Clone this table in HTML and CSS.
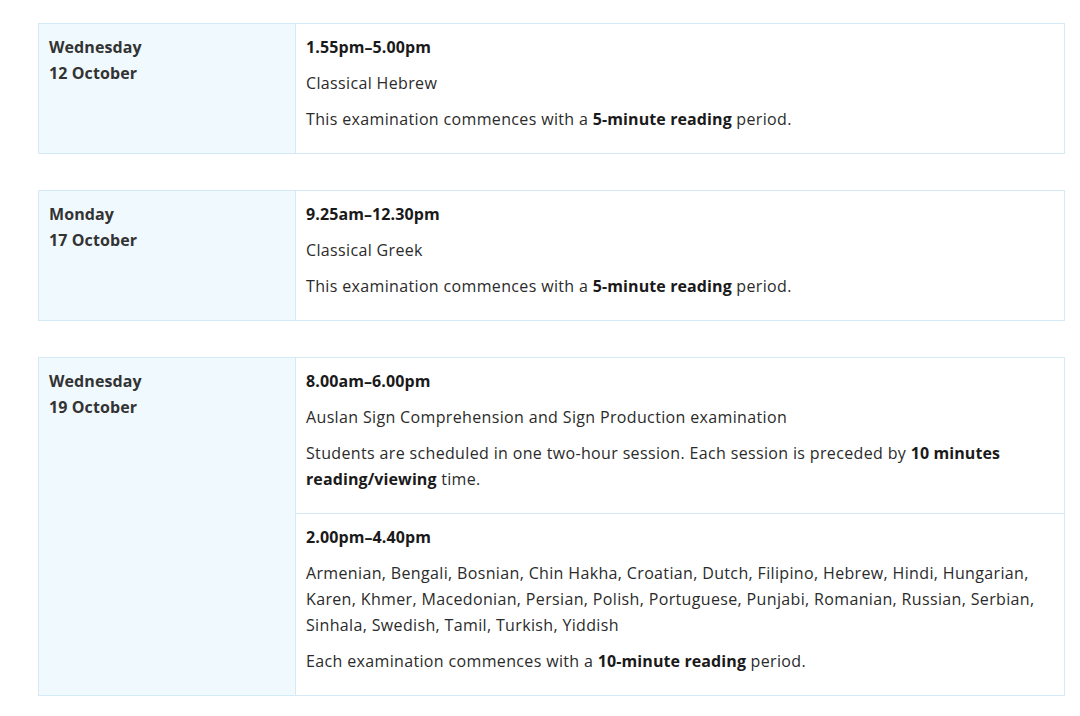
FILE: index.html
```html
<!DOCTYPE html>
<html lang="en">
<head>
<meta charset="utf-8">
<title>Examination timetable</title>
<link rel="stylesheet" href="styles.css">
</head>
<body>
<main class="page">
  <table class="exam">
    <tr>
      <th class="date" rowspan="1">Wednesday<br>12 October</th>
      <td class="session">
        <p class="time">1.55pm–5.00pm</p>
        <p>Classical Hebrew</p>
        <p>This examination commences with a <strong>5-minute reading</strong> period.</p>
      </td>
    </tr>
  </table>
  <table class="exam">
    <tr>
      <th class="date">Monday<br>17 October</th>
      <td class="session">
        <p class="time">9.25am–12.30pm</p>
        <p>Classical Greek</p>
        <p>This examination commences with a <strong>5-minute reading</strong> period.</p>
      </td>
    </tr>
  </table>
  <table class="exam">
    <tr>
      <th class="date" rowspan="2">Wednesday<br>19 October</th>
      <td class="session">
        <p class="time">8.00am–6.00pm</p>
        <p>Auslan Sign Comprehension and Sign Production examination</p>
        <p>Students are scheduled in one two-hour session. Each session is preceded by <strong>10 minutes</strong> <strong>reading/viewing</strong> time.</p>
      </td>
    </tr>
    <tr>
      <td class="session">
        <p class="time">2.00pm–4.40pm</p>
        <p>Armenian, Bengali, Bosnian, Chin Hakha, Croatian, Dutch, Filipino, Hebrew, Hindi, Hungarian, Karen, Khmer, Macedonian, Persian, Polish, Portuguese, Punjabi, Romanian, Russian, Serbian, Sinhala, Swedish, Tamil, Turkish, Yiddish</p>
        <p>Each examination commences with a <strong>10-minute reading</strong> period.</p>
      </td>
    </tr>
  </table>
</main>
</body>
</html>
```

FILE: styles.css
```css
html, body {
  margin: 0;
  padding: 0;
  background: #ffffff;
}
body {
  font-family: "Open Sans", "Liberation Sans", sans-serif;
  font-size: 16px;
  line-height: 26px;
  letter-spacing: 0.35px;
  color: #2b2b2b;
}
.page {
  padding: 23px 16px 0 38px;
}
.exam {
  width: 1027px;
  border-collapse: collapse;
  margin-bottom: 36px;
}
.exam th, .exam td {
  border: 1px solid #d4ebf7;
  vertical-align: top;
  padding: 10px 10px 11px 10px;
  text-align: left;
}
.date {
  width: 236px;
  background: #f0f9fd;
  font-weight: 700;
  color: #333333;
  letter-spacing: 0.1px;
}
.session p {
  margin: 0 0 10px 0;
}
.session .time {
  font-weight: 700;
  color: #1a1a1a;
  letter-spacing: 0.1px;
}
strong {
  font-weight: 700;
  color: #1a1a1a;
  letter-spacing: 0.1px;
}
```
